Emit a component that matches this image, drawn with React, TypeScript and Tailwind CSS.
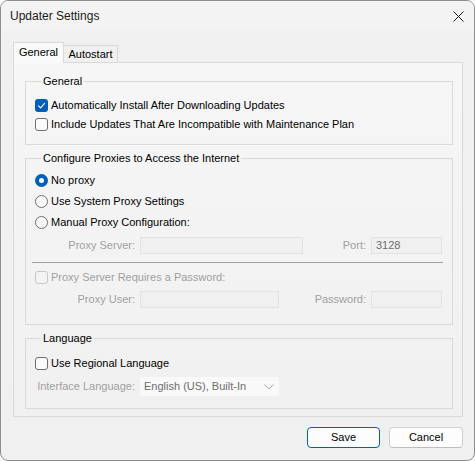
import type { ReactNode } from 'react';

const font = { fontFamily: '"Segoe UI", "Liberation Sans", Arial, sans-serif' };

function Checkbox({ checked = false, disabled = false, label }: { checked?: boolean; disabled?: boolean; label: string }) {
  return (
    <div className="flex h-[19px] items-center">
      {checked ? (
        <span className="flex h-[13px] w-[13px] items-center justify-center rounded-[3px] bg-[#005fb8]">
          <svg width="9" height="9" viewBox="0 0 9 9" fill="none">
            <path d="M1.5 4.8 3.6 6.8 7.6 2.4" stroke="#fff" strokeWidth="1.1" strokeLinecap="round" strokeLinejoin="round" />
          </svg>
        </span>
      ) : (
        <span
          className={`h-[13px] w-[13px] rounded-[3px] border ${
            disabled ? 'border-[#c8c8c8] bg-[#f3f3f3]' : 'border-[#6e6e6e] bg-[#fbfbfb]'
          }`}
        />
      )}
      <span className={`ml-[3px] ${disabled ? 'text-[#a0a0a0]' : 'text-[#000]'}`}>{label}</span>
    </div>
  );
}

function Radio({ checked = false, label }: { checked?: boolean; label: string }) {
  return (
    <div className="flex h-[21px] items-center">
      {checked ? (
        <span className="flex h-[13px] w-[13px] items-center justify-center rounded-full bg-[#005fb8]">
          <span className="h-[5px] w-[5px] rounded-full bg-white" />
        </span>
      ) : (
        <span className="h-[13px] w-[13px] rounded-full border border-[#6e6e6e] bg-[#f8f8f8]" />
      )}
      <span className="ml-[3px] text-[#000]">{label}</span>
    </div>
  );
}

function Group({ title, className, children }: { title: string; className: string; children: ReactNode }) {
  return (
    <fieldset className={`ml-[11px] mr-[9px] border border-[#d9d9d9] pl-[9px] ${className}`}>
      <legend className="ml-[6px] px-[2px] leading-[16px] text-[#000]">{title}</legend>
      {children}
    </fieldset>
  );
}

function Field({ width, value }: { width: string; value?: string }) {
  return (
    <div className={`ml-[5px] h-[17px] border border-[#e2e2e2] bg-[#f0f0f0] pl-[4px] leading-[15px] text-[#6d6d6d] ${width}`}>
      {value}
    </div>
  );
}

export default function App() {
  return (
    <div
      style={font}
      className="flex h-[461px] w-[475px] flex-col overflow-hidden rounded-[8px] border border-[#8e8e8e] bg-[#f0f0f0] text-[11px] whitespace-nowrap"
    >
      {/* Title bar */}
      <div className="flex h-[30px] shrink-0 items-center justify-between bg-[#f3f3f3] pl-[9px] pr-[9px]">
        <span className="text-[12px] text-[#1a1a1a]">Updater Settings</span>
        <svg width="11" height="11" viewBox="0 0 11 11" className="mr-[1px]">
          <path d="M0.5 0.5 10.5 10.5M10.5 0.5 0.5 10.5" stroke="#1a1a1a" strokeWidth="1" />
        </svg>
      </div>

      <div className="flex flex-1 flex-col pl-[12px] pr-[11px] pt-[11px]">
        {/* Tabs */}
        <div className="relative z-10 flex h-[20px] items-end">
          <div className="-mb-px flex h-[21px] w-[51px] items-center justify-center border border-b-0 border-[#d9d9d9] bg-[#f9f9f9] pb-[1px]">
            General
          </div>
          <div className="flex h-[17px] w-[54px] items-center justify-center border border-l-0 border-b-0 border-[#d9d9d9] bg-[#f0f0f0] pt-[1px]">
            Autostart
          </div>
        </div>

        {/* Tab panel */}
        <div className="flex h-[355px] w-[450px] flex-col border border-[#d9d9d9] bg-linear-to-b from-[#f6f6f6] to-[#f0f0f0] pt-[10px]">
          <Group title="General" className="pb-[10px]">
            <div className="pt-[7px]">
              <Checkbox checked label="Automatically Install After Downloading Updates" />
              <Checkbox label="Include Updates That Are Incompatible with Maintenance Plan" />
            </div>
          </Group>

          <Group title="Configure Proxies to Access the Internet" className="mt-[5px] pb-[16px]">
            <div className="pt-[4px]">
              <Radio checked label="No proxy" />
              <Radio label="Use System Proxy Settings" />
              <Radio label="Manual Proxy Configuration:" />
            </div>
            <div className="mt-[4px] flex h-[17px] items-center text-[#a0a0a0]">
              <span className="w-[100px] text-right">Proxy Server:</span>
              <Field width="w-[163px]" />
              <span className="w-[63px] text-right">Port:</span>
              <Field width="w-[71px]" value="3128" />
            </div>
            <div className="-ml-[3px] mt-[8px] h-px w-[411px] bg-[#a0a0a0]" />
            <div className="mt-[5px]">
              <Checkbox disabled label="Proxy Server Requires a Password:" />
            </div>
            <div className="mt-[4px] flex h-[17px] items-center text-[#a0a0a0]">
              <span className="w-[100px] text-right">Proxy User:</span>
              <Field width="w-[139px]" />
              <span className="w-[87px] text-right">Password:</span>
              <Field width="w-[71px]" />
            </div>
          </Group>

          <Group title="Language" className="mt-[5px] pb-[12px]">
            <div className="pt-[8px]">
              <Checkbox label="Use Regional Language" />
            </div>
            <div className="mt-[4px] flex h-[19px] items-center">
              <span className="w-[100px] text-right text-[#a0a0a0]">Interface Language:</span>
              <div className="ml-[5px] flex h-[19px] w-[139px] items-center justify-between rounded-[2px] bg-[#f9f9f9] pl-[4px] pr-[5px] text-[#6d6d6d]">
                <span>English (US), Built-In</span>
                <svg width="10" height="6" viewBox="0 0 10 6" fill="none">
                  <path d="M0.5 0.5 5 5 9.5 0.5" stroke="#a8a8a8" strokeWidth="1" />
                </svg>
              </div>
            </div>
          </Group>
        </div>

        {/* Buttons */}
        <div className="mt-[10px] flex justify-end gap-[9px]">
          <button className="h-[21px] w-[73px] rounded-[4px] border border-[#005fb8] bg-[#fdfdfd] text-[#000]">
            Save
          </button>
          <button className="h-[21px] w-[74px] rounded-[4px] border border-[#d0d0d0] border-b-[#bdbdbd] bg-[#fdfdfd] text-[#000]">
            Cancel
          </button>
        </div>
      </div>
    </div>
  );
}
